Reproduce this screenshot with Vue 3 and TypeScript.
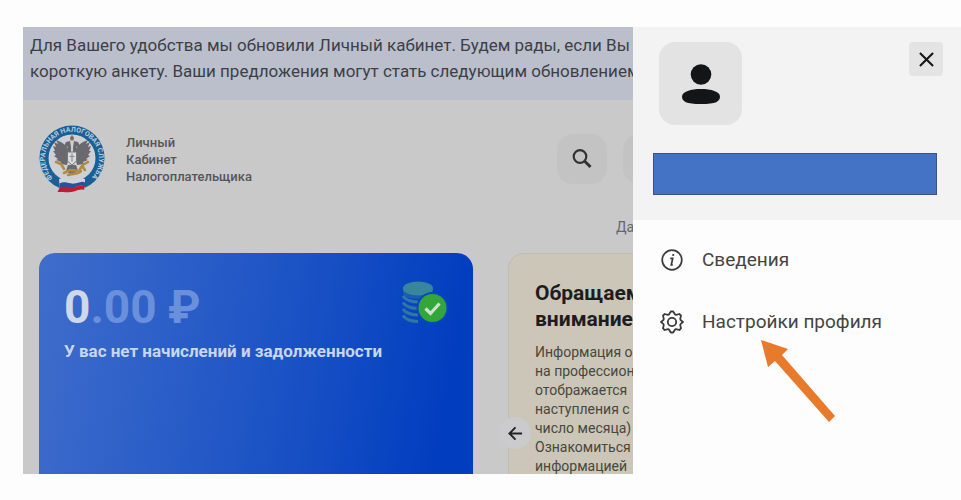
<script setup lang="ts">
interface MenuItem {
  id: 'info' | 'settings'
  label: string
}

const menu: MenuItem[] = [
  { id: 'info', label: 'Сведения' },
  { id: 'settings', label: 'Настройки профиля' },
]

const bannerLines: string[] = [
  'Для Вашего удобства мы обновили Личный кабинет. Будем рады, если Вы з',
  'короткую анкету. Ваши предложения могут стать следующим обновлением',
]

const brandLines: string[] = ['Личный', 'Кабинет', 'Налогоплательщика']

const noticeTitle: string[] = ['Обращаем', 'внимание']

const noticeLines: string[] = [
  'Информация о',
  'на профессион',
  'отображается',
  'наступления с',
  'число месяца)',
  'Ознакомиться',
  'информацией',
]
</script>

<template>
  <div class="stage">
    <div class="window">
      <main class="page">
        <p class="banner">
          <span v-for="line in bannerLines" :key="line" class="line">{{ line }}</span>
        </p>

        <header class="header">
          <a class="brand" href="#">
            <svg class="emblem" viewBox="0 0 66 68" aria-hidden="true">
              <defs>
                <path id="ring" d="M14 53A27 27 0 1 1 52 53" />
              </defs>
              <circle cx="33" cy="33" r="32.5" fill="#1a5f97" />
              <circle cx="33" cy="33" r="23.5" fill="#cdd1d5" />
              <text class="ring-text"><textPath href="#ring">ФЕДЕРАЛЬНАЯ НАЛОГОВАЯ СЛУЖБА</textPath></text>
              <g fill="#6a6a6e">
                <path d="M31 27C29 22 24 17 17 15l2 4-4-2 2 5-3-1 2 5-2 0 3 4-2 1 4 3-2 1 5 2-1 2 7 1z" />
                <path d="M35 27c2-5 7-10 14-12l-2 4 4-2-2 5 3-1-2 5 2 0-3 4 2 1-4 3 2 1-5 2 1 2-7 1z" />
                <path d="M27 17l4-1 1 6 0 6-4-1 1-5-4-1zM39 17l-4-1-1 6 0 6 4-1-1-5 4-1z" />
                <path d="M29 40h8l2 6-6 4-6-4z" />
              </g>
              <path d="M31 12.500l2-2.500 2 2.500-.5 3h-3z" fill="#8a6b52" />
              <path d="M28.500 27h9v9l-4.500 4-4.500-4z" fill="#d8dade" stroke="#77787c" />
              <path d="M33 28.500v8M30.500 31.500h5" stroke="#8a8d94" stroke-width="1.200" />
              <g fill="none" stroke="#b08b45" stroke-width="2.600" stroke-linecap="round">
                <path d="M17 37l5 2 3 5M49 37l-5 3-3 4M25 48l6-3 9 1M29 50c4-2 10 0 13-4M43 41l3 4" />
              </g>
              <path d="M20 54c7-3 10 2 15 1s8-3 11-1v11c-4-2-7-1-11 1-5 2-9 0-14 1z" fill="#cfd3dc" />
              <path d="M20.500 58.500c7-3 10 1 15 0s8-3 10.500-1v4c-3-2-7-1-11 1-5 2-9 0-14.500 1z" fill="#26539b" />
              <path d="M20.500 63c6-3 9 0 14-1s8-3 11.500-1l-1 4c-3-1-6 0-10 1.500-5 1.500-9 0-16.500.5z" fill="#bc1f35" />
            </svg>
            <span class="brand-name">
              <span v-for="line in brandLines" :key="line" class="line">{{ line }}</span>
            </span>
          </a>
          <button class="tool" type="button" aria-label="Поиск">
            <svg class="tool-icon" viewBox="0 0 20 20" fill="none" stroke="#333" stroke-width="2.200" aria-hidden="true">
              <circle cx="8" cy="7.500" r="6.300" />
              <path d="M12.500 12l6 6" stroke-width="3" />
            </svg>
          </button>
          <span class="tool tool-next"></span>
        </header>

        <p class="date">Да</p>

        <div class="cards">
          <section class="card balance">
            <div class="balance-top">
              <p class="amount">0<span class="cents">.00 ₽</span></p>
              <svg class="coins" viewBox="0 0 46 44" aria-hidden="true">
                <g fill="#2d74a6">
                  <path d="M1 8v5c3 6 26 7 30 0V8z" opacity=".5" />
                  <ellipse cx="16" cy="7.500" rx="15" ry="7" fill="#37869c" />
                </g>
                <path d="M1 15c2 4 9 6 15 6M1 21.500c2 4 9 6 15 6M1 28c2 4 9 6 15 6M1 34.500c2 4 9 6 15 6" fill="none" stroke="#2f78a5" stroke-width="3" />
                <circle cx="30.500" cy="27" r="16" fill="#0a47bd" />
                <circle cx="30.500" cy="27" r="14" fill="#32a638" />
                <path d="M23.500 27.500l5 5 9-10" fill="none" stroke="#cfe2cf" stroke-width="3.200" />
              </svg>
            </div>
            <h2 class="balance-text">У вас нет начислений и задолженности</h2>
          </section>

          <section class="card notice">
            <h2 class="notice-title">
              <span v-for="line in noticeTitle" :key="line" class="line">{{ line }}</span>
            </h2>
            <p class="notice-body">
              <span v-for="line in noticeLines" :key="line" class="line">{{ line }}</span>
            </p>
            <button class="prev" type="button" aria-label="Назад">
              <svg class="prev-icon" viewBox="0 0 16 16" fill="none" stroke="#222" stroke-width="2" aria-hidden="true">
                <path d="M15 8H2M8 1.500L1.500 8 8 14.500" />
              </svg>
            </button>
          </section>
        </div>
      </main>

      <aside class="panel">
        <div class="profile">
          <div class="profile-top">
            <div class="avatar">
              <svg class="avatar-icon" viewBox="0 0 38 40" fill="#141517" aria-hidden="true">
                <circle cx="19" cy="10.500" r="10.300" />
                <path d="M0 32.500C0 27.500 9 25 19 25s19 2.500 19 7.500S34 40 19 40 0 37.500 0 32.500z" />
              </svg>
            </div>
            <button class="close" type="button" aria-label="Закрыть">
              <svg class="close-icon" viewBox="0 0 16 16" fill="none" stroke="#161616" stroke-width="2.200" aria-hidden="true">
                <path d="M1 1l14 14M15 1L1 15" />
              </svg>
            </button>
          </div>
          <div class="name-cover"></div>
        </div>

        <nav class="menu">
          <a v-for="item in menu" :key="item.id" class="menu-item" href="#">
            <svg v-if="item.id === 'info'" class="menu-icon" viewBox="0 0 24 24" fill="none" stroke="#3a3a3c" stroke-width="1.700" aria-hidden="true">
              <circle cx="12" cy="12" r="9.800" />
              <path d="M10.300 10.300h2.400L11.300 17h1.500" />
              <circle cx="13.200" cy="7" r="1.100" fill="#3a3a3c" stroke="none" />
            </svg>
            <svg v-else class="menu-icon" viewBox="0 0 24 24" fill="none" stroke="#3a3a3c" stroke-width="1.800" stroke-linejoin="round" aria-hidden="true">
              <path d="M10.800 1.500h2.400l1.700 2.800 1.200.5 3.200-.8 1.700 1.700-.8 3.200.5 1.200 2.300 1.900-2.300 1.900-.5 1.200.8 3.200-1.700 1.700-3.200-.8-1.200.5-1.700 2.800h-2.400l-1.700-2.800-1.200-.5-3.200.8L3 18.300l.8-3.200-.5-1.200L1 12l2.300-1.900.5-1.200L3 5.700 4.700 4l3.200.8 1.200-.5z" />
              <circle cx="12" cy="12" r="4.200" />
            </svg>
            <span>{{ item.label }}</span>
          </a>
        </nav>

        <svg class="pointer" viewBox="0 0 76 84" aria-hidden="true">
          <path d="M1 1l27 9-6 6 53 61-6 6-54-61-7 6z" fill="#e87a2b" />
        </svg>
      </aside>
    </div>
  </div>
</template>

<style>
body {
  margin: 0;
  background: #fdfdfd;
}
</style>

<style scoped>
.stage {
  padding: 27px 0 26px 23px;
  font-family: Roboto, "Liberation Sans", sans-serif;
  color: #3c3f47;
}

.stage *,
.stage {
  box-sizing: border-box;
}

p,
h2 {
  margin: 0;
}

button {
  border: 0;
  padding: 0;
}

a {
  color: inherit;
  text-decoration: none;
}

.line {
  display: block;
  white-space: nowrap;
}

.window {
  display: flex;
}

.page {
  flex: 1;
  min-width: 0;
  overflow: hidden;
  background: #c9c9ca;
}

.banner {
  padding: 5px 7px 16px;
  background: #bbbfcb;
  font-size: 17px;
  line-height: 26px;
}

.header {
  display: flex;
  align-items: center;
  gap: 16px;
  width: max-content;
  min-width: 100%;
  padding: 25px 0 0 16px;
}

.brand {
  display: flex;
  align-items: center;
  gap: 21px;
  width: 502px;
}

.emblem {
  width: 66px;
  height: 68px;
}

.ring-text {
  font-size: 7px;
  font-weight: 700;
  fill: #b4cbd9;
}

.brand-name {
  font-size: 13px;
  font-weight: 500;
  line-height: 17px;
  color: #55565a;
}

.tool {
  display: grid;
  place-items: center;
  flex: none;
  width: 50px;
  height: 50px;
  border-radius: 16px;
  background: #c3c3c4;
}

.tool-icon {
  width: 20px;
  height: 20px;
}

.date {
  padding: 24px 0 16px 593px;
  font-size: 14px;
  line-height: 20px;
  white-space: nowrap;
  color: #66676b;
}

.cards {
  display: grid;
  grid-template-columns: 434px 300px;
  gap: 35px;
  height: 221px;
  padding-left: 16px;
}

.card {
  border-radius: 16px 16px 0 0;
}

.balance {
  padding: 28px 25px;
  background: linear-gradient(100deg, #3f6dcb 0%, #1850c4 60%, #003dbf 92%);
  color: #c9d6ef;
}

.balance-top {
  display: flex;
  justify-content: space-between;
}

.amount {
  font-size: 46px;
  font-weight: 700;
  line-height: 52px;
  color: #cfd8e6;
}

.cents {
  color: #6b90db;
}

.coins {
  width: 46px;
  height: 44px;
}

.balance-text {
  padding-top: 7px;
  font-size: 17px;
  font-weight: 700;
  line-height: 22px;
}

.notice {
  position: relative;
  padding: 26px;
  border: 1px solid #c0bdb3;
  border-bottom: 0;
  background: #cbc6b7;
}

.notice-title {
  font-size: 21px;
  font-weight: 700;
  line-height: 26px;
  color: #1d1d1f;
}

.notice-body {
  padding-top: 11px;
  font-size: 14px;
  line-height: 19px;
  color: #48463f;
}

.prev {
  position: absolute;
  left: -10px;
  top: 163px;
  display: grid;
  place-items: center;
  width: 32px;
  height: 32px;
  border-radius: 50%;
  background: #cbcbcd;
}

.prev-icon {
  width: 15px;
  height: 15px;
}

.panel {
  position: relative;
  flex: none;
  width: 328px;
  background: #fdfdfd;
}

.profile {
  padding: 15px 18px 25px;
  background: #f3f3f3;
}

.profile-top {
  display: flex;
  justify-content: space-between;
  padding-left: 8px;
}

.avatar {
  display: grid;
  place-items: center;
  width: 83px;
  height: 83px;
  border-radius: 16px;
  background: #e3e3e4;
}

.avatar-icon {
  width: 38px;
  height: 40px;
}

.close {
  display: grid;
  place-items: center;
  width: 34px;
  height: 34px;
  border-radius: 4px;
  background: #e4e4e5;
}

.close-icon {
  width: 15px;
  height: 15px;
}

.name-cover {
  height: 42px;
  margin: 28px 6px 0 2px;
  border: 1px solid #36538c;
  background: #4472c4;
}

.menu {
  display: grid;
  gap: 38px;
  padding: 28px 27px;
}

.menu-item {
  display: flex;
  align-items: center;
  gap: 18px;
  font-size: 19px;
  line-height: 24px;
  color: #444;
}

.menu-icon {
  width: 24px;
  height: 24px;
}

.pointer {
  position: absolute;
  left: 127px;
  top: 312px;
  width: 76px;
  height: 84px;
}
</style>
